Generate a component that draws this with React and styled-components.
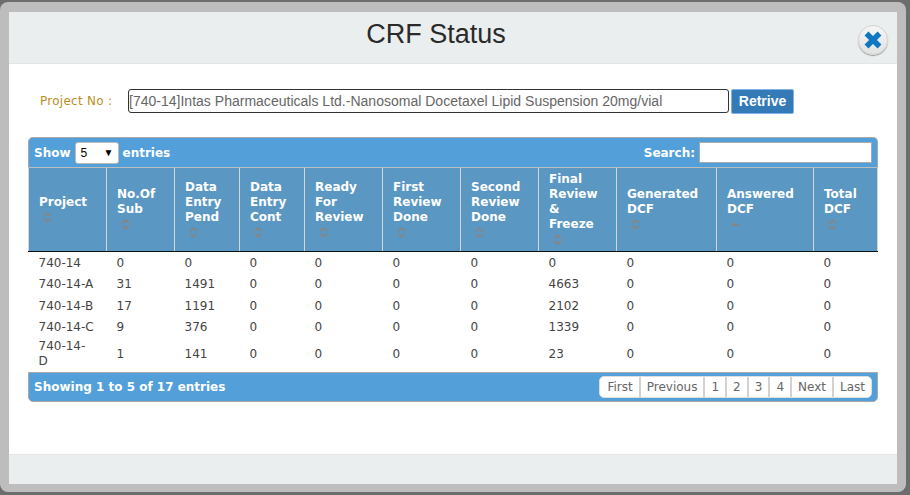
import React from 'react'
import styled, { createGlobalStyle } from 'styled-components'

const GlobalStyle = createGlobalStyle`
html, body {
  margin: 0;
  padding: 0;
  background: #6d6d6d;
}
`

const columns = [
  { label: 'Project', width: 78 },
  { label: 'No.Of Sub', width: 68 },
  { label: 'Data Entry Pend', width: 65 },
  { label: 'Data Entry Cont', width: 65 },
  { label: 'Ready For Review', width: 78 },
  { label: 'First Review Done', width: 78 },
  { label: 'Second Review Done', width: 78 },
  { label: 'Final\nReview\n&\nFreeze', width: 78 },
  { label: 'Generated DCF', width: 100 },
  { label: 'Answered DCF', width: 97, sorted: true },
  { label: 'Total DCF', width: 64 },
]

const rows = [
  ['740-14', 0, 0, 0, 0, 0, 0, 0, 0, 0, 0],
  ['740-14-A', 31, 1491, 0, 0, 0, 0, 4663, 0, 0, 0],
  ['740-14-B', 17, 1191, 0, 0, 0, 0, 2102, 0, 0, 0],
  ['740-14-C', 9, 376, 0, 0, 0, 0, 1339, 0, 0, 0],
  ['740-14-\nD', 1, 141, 0, 0, 0, 0, 23, 0, 0, 0],
]

const pages = ['First', 'Previous', '1', '2', '3', '4', 'Next', 'Last']

const SortIcon = ({ up }) => (
  <SortSvg viewBox="0 0 9 11" width="9" height="11">
    {up ? (
      <path d="M0.5 7 L4.5 3.5 L8.5 7 Z" fill="#8f8078" />
    ) : (
      <path d="M1 4.2 L4.5 1 L8 4.2 M1 6.8 L4.5 10 L8 6.8" fill="none" stroke="#94806f" strokeWidth="1.2" />
    )}
  </SortSvg>
)

const App = () => {
  return (
    <Page>
      <GlobalStyle />
      <Frame>
        <Modal>
          <Header>
            <Title>CRF Status</Title>
            <CloseButton>
              <svg viewBox="0 0 20 20" width="20" height="20">
                <path d="M3.5 3.5 L16.5 16.5 M16.5 3.5 L3.5 16.5" stroke="#0d77c4" strokeWidth="5.5" />
              </svg>
            </CloseButton>
          </Header>
          <Body>
            <ProjectRow>
              <ProjectLabel>Project No :</ProjectLabel>
              <ProjectInput>[740-14]Intas Pharmaceuticals Ltd.-Nanosomal Docetaxel Lipid Suspension 20mg/vial</ProjectInput>
              <RetriveButton>Retrive</RetriveButton>
            </ProjectRow>
            <TablePanel>
              <TopBar>
                <BarGroup>
                  Show
                  <EntrySelect>
                    5<span>▼</span>
                  </EntrySelect>
                  entries
                </BarGroup>
                <BarGroup>
                  Search:
                  <SearchBox />
                </BarGroup>
              </TopBar>
              <Table>
                <colgroup>
                  {columns.map((c) => (
                    <col key={c.label} width={c.width} />
                  ))}
                </colgroup>
                <thead>
                  <tr>
                    {columns.map((c) => (
                      <Th key={c.label}>
                        {c.label}
                        <SortIcon up={c.sorted} />
                      </Th>
                    ))}
                  </tr>
                </thead>
                <tbody>
                  {rows.map((r) => (
                    <tr key={r[0]}>
                      {r.map((v, i) => (
                        <Td key={i}>{v}</Td>
                      ))}
                    </tr>
                  ))}
                </tbody>
              </Table>
              <BottomBar>
                <span>Showing 1 to 5 of 17 entries</span>
                <Pager>
                  {pages.map((p) => (
                    <PageButton key={p}>{p}</PageButton>
                  ))}
                </Pager>
              </BottomBar>
            </TablePanel>
          </Body>
          <Footer />
        </Modal>
      </Frame>
    </Page>
  )
}

export default App

const Page = styled.div`
  width: 910px;
  height: 495px;
  overflow: hidden;
  box-sizing: border-box;
  padding: 2px 4px 3px 0;
  background: #6d6d6d;
`
const Frame = styled.div`
  box-sizing: border-box;
  height: 490px;
  padding: 10px 9px 8px 9px;
  background: #bdbdbd;
  border-radius: 8px;
`
const Modal = styled.div`
  height: 100%;
  display: flex;
  flex-direction: column;
  background: #fff;
`
const Header = styled.div`
  position: relative;
  height: 51px;
  flex-shrink: 0;
  padding-right: 34px;
  display: flex;
  justify-content: center;
  align-items: center;
  background: #ebeeee;
  border-bottom: 1px solid #e5e5e5;
`
const Title = styled.h3`
  margin: 0 0 6px;
  font: 400 27px "Liberation Sans", Arial, sans-serif;
  color: #2a2a2a;
`
const CloseButton = styled.div`
  position: absolute;
  top: 13px;
  right: 9px;
  width: 30px;
  height: 30px;
  border-radius: 50%;
  display: flex;
  align-items: center;
  justify-content: center;
  background: linear-gradient(#f6f6f6, #e2e2e2);
  border: 1px solid #d4d4d4;
  box-sizing: border-box;
  box-shadow: 0 1px 1px #999;
`
const Body = styled.div`
  flex: 1;
  padding: 24px 19px 0;
`
const ProjectRow = styled.div`
  display: flex;
  align-items: center;
  height: 26px;
  padding-left: 12px;
`
const ProjectLabel = styled.div`
  width: 88px;
  font: 400 12px "DejaVu Sans", Verdana, sans-serif;
  letter-spacing: 0.27px;
  color: #bc8d22;
`
const ProjectInput = styled.div`
  box-sizing: border-box;
  width: 601px;
  height: 24px;
  white-space: nowrap;
  overflow: hidden;
  font: 400 14px/22px "Liberation Sans", Arial, sans-serif;
  letter-spacing: 0.012px;
  color: #666;
  border: 1px solid #333;
  border-radius: 3px;
`
const RetriveButton = styled.button`
  box-sizing: border-box;
  width: 63px;
  height: 25px;
  margin-left: 2px;
  padding: 0;
  font: 700 14px "Liberation Sans", Arial, sans-serif;
  color: #fff;
  background: #337ab7;
  border: 1px solid #7fb2ea;
  border-radius: 2px;
`
const TablePanel = styled.div`
  margin-top: 23px;
  width: 850px;
`
const TopBar = styled.div`
  box-sizing: border-box;
  height: 31px;
  display: flex;
  justify-content: space-between;
  align-items: center;
  padding: 0 5px;
  font: 700 12px "DejaVu Sans", Verdana, sans-serif;
  color: #fff;
  background: #539fd9;
  border: 1px solid #a9a9a9;
  border-bottom-color: #bdbdbd;
  border-radius: 5px 5px 0 0;
`
const BarGroup = styled.div`
  display: flex;
  align-items: center;
  gap: 4px;
`
const EntrySelect = styled.div`
  box-sizing: border-box;
  width: 44px;
  height: 22px;
  padding: 0 4px 0 5px;
  display: flex;
  justify-content: space-between;
  align-items: center;
  font: 400 12px "Liberation Sans", Arial, sans-serif;
  color: #000;
  background: #fff;
  border: 1px solid #bbb;
  border-radius: 3px;
  span {
    font-size: 10px;
  }
`
const SearchBox = styled.div`
  box-sizing: border-box;
  width: 173px;
  height: 21px;
  background: #fff;
  border: 1px solid #aaa;
`
const Table = styled.table`
  width: 850px;
  table-layout: fixed;
  border-collapse: collapse;
`
const Th = styled.th`
  box-sizing: border-box;
  height: 83px;
  padding: 2px 5px 0 10px;
  text-align: left;
  vertical-align: middle;
  white-space: pre-line;
  font: 700 12px/15px "DejaVu Sans", Verdana, sans-serif;
  color: #fff;
  background: #5a97c3;
  border-left: 1px solid #d5d5d5;
  border-bottom: 1px solid #111;
  &:last-child {
    border-right: 1px solid #d5d5d5;
  }
`
const SortSvg = styled.svg`
  display: block;
  margin: 2px 0 3px 4px;
`
const Td = styled.td`
  padding: 4px 5px 2.5px 10px;
  font: 400 12px/15px "DejaVu Sans", Verdana, sans-serif;
  color: #444;
  vertical-align: middle;
  white-space: pre-line;
  tr:last-child > & {
    padding-top: 1.5px;
    padding-bottom: 2.5px;
  }
`
const BottomBar = styled.div`
  box-sizing: border-box;
  height: 30px;
  display: flex;
  justify-content: space-between;
  align-items: center;
  padding: 0 5px;
  font: 700 12px "DejaVu Sans", Verdana, sans-serif;
  color: #fff;
  background: #539fd9;
  border: 1px solid #a9a9a9;
  border-radius: 0 0 5px 5px;
`
const Pager = styled.div`
  display: flex;
  height: 20px;
  background: #fff;
  border-radius: 5px;
  overflow: hidden;
  border: 1px solid #ddd;
`
const PageButton = styled.div`
  padding: 0 6px;
  font: 400 12px/20px "DejaVu Sans", Verdana, sans-serif;
  color: #666;
  border-left: 2px solid #d2d2d2;
  &:first-child {
    border-left: 0;
    padding-left: 7px;
  }
`
const Footer = styled.div`
  height: 29px;
  background: #ebeeee;
  border-top: 1px solid #e5e5e5;
`
